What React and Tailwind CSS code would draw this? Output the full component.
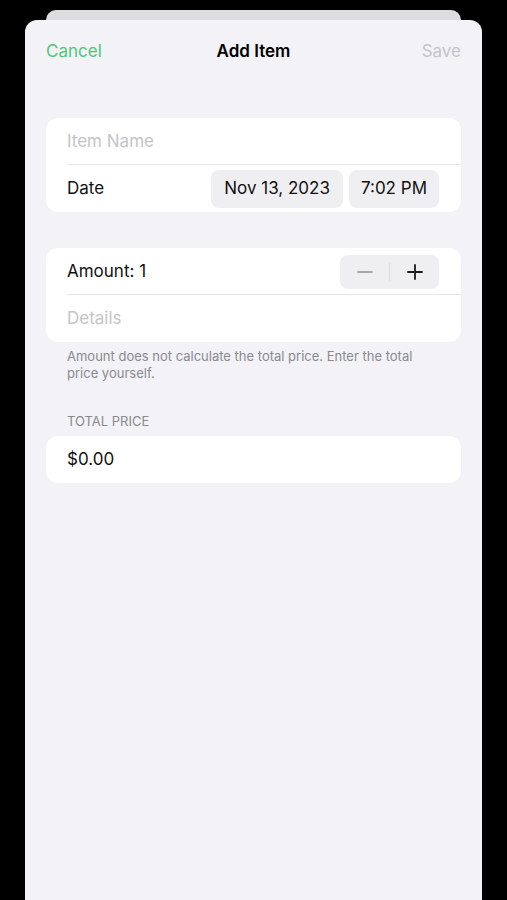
import { useState } from "react";

function Row({ children, divider }) {
  return (
    <div className="relative flex h-[47px] items-center pl-[21px] pr-[22px]">
      {children}
      {divider && (
        <div className="absolute bottom-0 left-[21px] right-0 h-px bg-[#e6e6ea]" />
      )}
    </div>
  );
}

function App() {
  const [amount, setAmount] = useState(1);

  return (
    <div
      className="flex min-h-[900px] flex-col bg-black"
      style={{ fontFamily: "Inter, 'Liberation Sans', sans-serif" }}
    >
      <div className="mx-[46px] mt-[10px] h-[10px] rounded-t-[10px] bg-[#dddddf]" />
      <div className="mx-[25px] flex flex-1 flex-col rounded-t-[12px] bg-[#f2f2f7] px-[21px]">
        <div className="grid h-[62px] grid-cols-[1fr_auto_1fr] items-center pt-[1px]">
          <button className="justify-self-start text-[17px] text-[#4cc878]">Cancel</button>
          <h1 className="text-[17px] font-semibold text-black">Add Item</h1>
          <button className="justify-self-end text-[17px] text-[#c4c4c8]">Save</button>
        </div>

        <div className="mt-[36px] rounded-[12px] bg-white">
          <Row divider>
            <span className="text-[17px] text-[#c5c5c9]">Item Name</span>
          </Row>
          <Row>
            <span className="flex-1 text-[17px] text-[#111]">Date</span>
            <span className="flex h-[38px] items-center rounded-[8px] bg-[#efeff1] px-[13px] text-[17px] text-[#111]">
              Nov 13, 2023
            </span>
            <span className="ml-[6px] flex h-[38px] items-center rounded-[8px] bg-[#efeff1] px-[12px] text-[17px] text-[#111]">
              7:02 PM
            </span>
          </Row>
        </div>

        <div className="mt-[36px] rounded-[12px] bg-white">
          <Row divider>
            <span className="flex-1 text-[17px] text-[#111]">Amount: {amount}</span>
            <div className="flex h-[34px] w-[99px] items-center rounded-[8px] bg-[#efeff1]">
              <button
                onClick={() => setAmount((a) => Math.max(1, a - 1))}
                className="flex flex-1 items-center justify-center"
              >
                <svg width="18" height="18" viewBox="0 0 18 18">
                  <path d="M2 9h14" stroke="#8e8e93" strokeWidth="1.6" strokeLinecap="round" />
                </svg>
              </button>
              <div className="h-[18px] w-px bg-[#dcdce0]" />
              <button
                onClick={() => setAmount((a) => a + 1)}
                className="flex flex-1 items-center justify-center"
              >
                <svg width="18" height="18" viewBox="0 0 18 18">
                  <path d="M2 9h14M9 2v14" stroke="#1c1c1e" strokeWidth="1.8" strokeLinecap="round" />
                </svg>
              </button>
            </div>
          </Row>
          <Row>
            <span className="text-[17px] text-[#c5c5c9]">Details</span>
          </Row>
        </div>
        <p className="mt-[6px] px-[21px] text-[13px] leading-[17px] text-[#8a8a8e]">
          Amount does not calculate the total price. Enter the total price yourself.
        </p>

        <p className="mt-[31px] px-[21px] text-[13px] uppercase leading-[17px] text-[#8a8a8e]">
          Total Price
        </p>
        <div className="mt-[6px] rounded-[12px] bg-white">
          <Row>
            <span className="text-[17px] text-[#111]">$0.00</span>
          </Row>
        </div>
      </div>
    </div>
  );
}

export default App;
